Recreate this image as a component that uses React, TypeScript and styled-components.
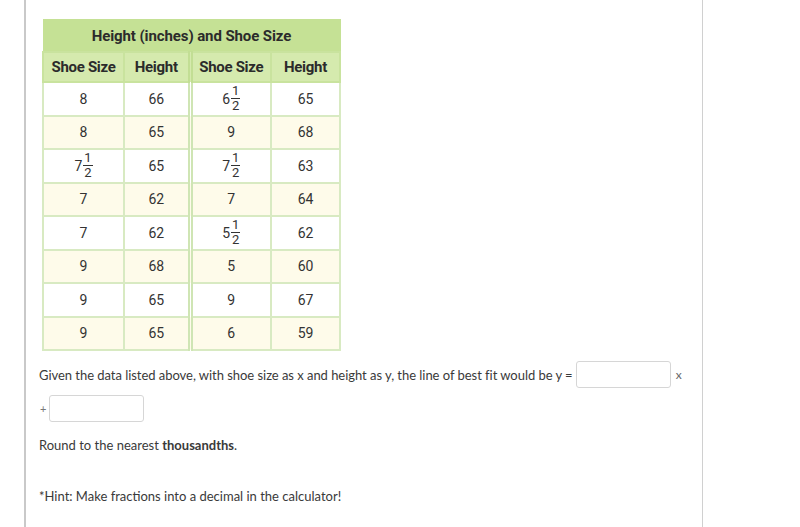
import React from "react";
import styled, { createGlobalStyle } from "styled-components";

const GlobalStyle = createGlobalStyle`
  html, body {
    margin: 0;
    padding: 0;
    background: #ffffff;
  }
`;

const StyledPage = styled.div`
  margin-left: 24px;
  width: 679px;
  min-height: 527px;
  box-sizing: border-box;
  border-left: 2px solid #c9c9c9;
  border-right: 1px solid #d0d0d0;
  padding: 19px 0 0 13px;
  font-family: Lato, "Open Sans", sans-serif;
  color: #3a3a3a;
`;

const StyledTable = styled.table`
  margin-left: 3px;
  border-collapse: collapse;
  font-family: Roboto, "Liberation Sans", sans-serif;
  font-size: 14px;
  color: #333333;
  table-layout: fixed;
`;

const StyledTitleCell = styled.th`
  height: 31px;
  padding: 0;
  background-color: #c5e195;
  border: 1px solid #c5e195;
  font-weight: 700;
  font-size: 15px;
  color: #2b2b2b;
  text-align: center;
  letter-spacing: -0.1px;
`;

const StyledHeadCell = styled.th<{ split?: boolean }>`
  height: 28px;
  padding: 0;
  background-color: #d5eaae;
  border: 2px solid #c9e39e;
  border-right: ${({ split }) => (split ? "5px double #c2de94" : "2px solid #c9e39e")};
  font-weight: 700;
  font-size: 15px;
  color: #2b2b2b;
  text-align: center;
  letter-spacing: -0.3px;
`;

const StyledRow = styled.tr<{ shaded: boolean }>`
  background-color: ${({ shaded }) => (shaded ? "#fefbea" : "#ffffff")};
`;

const StyledCell = styled.td<{ split?: boolean }>`
  height: 31.5px;
  padding: 0;
  text-align: center;
  border: 2px solid #d8eac2;
  border-right: ${({ split }) => (split ? "5px double #cfe5b4" : "2px solid #d8eac2")};
`;

const StyledMixed = styled.span`
  display: inline-flex;
  align-items: center;
`;

const StyledFraction = styled.span`
  display: inline-flex;
  flex-direction: column;
  align-items: center;
  margin-left: 1px;
  font-size: 13px;
  line-height: 12px;
`;

const StyledNumerator = styled.span`
  padding: 0 1px 1px;
  border-bottom: 1px solid #333333;
`;

const StyledDenominator = styled.span`
  padding-top: 1px;
`;

const StyledLine = styled.div`
  display: flex;
  align-items: center;
  font-size: 13px;
  line-height: 16px;
`;

const StyledFirstLine = styled(StyledLine)`
  margin-top: 10px;
  letter-spacing: -0.04px;
`;

const StyledSecondLine = styled(StyledLine)`
  margin-top: 7px;
`;

const StyledAnswerBox = styled.input`
  width: 95px;
  height: 27px;
  box-sizing: border-box;
  margin: 0 5px 0 3px;
  border: 1px solid #d6d6d6;
  border-radius: 3px;
  background: #ffffff;
  outline: none;
`;

const StyledPlus = styled.span`
  font-size: 11px;
  color: #777777;
  margin-left: 1px;
`;

const StyledX = styled.span`
  color: #666666;
  font-size: 12px;
`;

const StyledParagraph = styled.p<{ top: number }>`
  margin: ${({ top }) => top}px 0 0;
  font-size: 13px;
  line-height: 16px;
`;

type Value = string | { whole: string; num: string; den: string };

const half = (whole: string): Value => ({ whole, num: "1", den: "2" });

const rows: Value[][] = [
  ["8", "66", half("6"), "65"],
  ["8", "65", "9", "68"],
  [half("7"), "65", half("7"), "63"],
  ["7", "62", "7", "64"],
  ["7", "62", half("5"), "62"],
  ["9", "68", "5", "60"],
  ["9", "65", "9", "67"],
  ["9", "65", "6", "59"],
];

const widths = [81, 66, 81, 69];

const CellValue: React.FC<{ value: Value }> = ({ value }) => {
  if (typeof value === "string") return <>{value}</>;
  return (
    <StyledMixed>
      {value.whole}
      <StyledFraction>
        <StyledNumerator>{value.num}</StyledNumerator>
        <StyledDenominator>{value.den}</StyledDenominator>
      </StyledFraction>
    </StyledMixed>
  );
};

const App: React.FC = () => {
  return (
    <>
      <GlobalStyle />
      <StyledPage>
        <StyledTable>
          <colgroup>
            {widths.map((w, i) => (
              <col key={i} style={{ width: w }} />
            ))}
          </colgroup>
          <thead>
            <tr>
              <StyledTitleCell colSpan={4}>Height (inches) and Shoe Size</StyledTitleCell>
            </tr>
            <tr>
              <StyledHeadCell>Shoe Size</StyledHeadCell>
              <StyledHeadCell split>Height</StyledHeadCell>
              <StyledHeadCell>Shoe Size</StyledHeadCell>
              <StyledHeadCell>Height</StyledHeadCell>
            </tr>
          </thead>
          <tbody>
            {rows.map((row, r) => (
              <StyledRow key={r} shaded={r % 2 === 1}>
                {row.map((value, c) => (
                  <StyledCell key={c} split={c === 1}>
                    <CellValue value={value} />
                  </StyledCell>
                ))}
              </StyledRow>
            ))}
          </tbody>
        </StyledTable>

        <StyledFirstLine>
          Given the data listed above, with shoe size as x and height as y, the line of best fit would be y =
          <StyledAnswerBox aria-label="slope" />
          <StyledX>x</StyledX>
        </StyledFirstLine>
        <StyledSecondLine>
          <StyledPlus>+</StyledPlus>
          <StyledAnswerBox aria-label="intercept" />
        </StyledSecondLine>

        <StyledParagraph top={15}>
          Round to the nearest <b>thousandths</b>.
        </StyledParagraph>
        <StyledParagraph top={35}>*Hint: Make fractions into a decimal in the calculator!</StyledParagraph>
      </StyledPage>
    </>
  );
};

export default App;
